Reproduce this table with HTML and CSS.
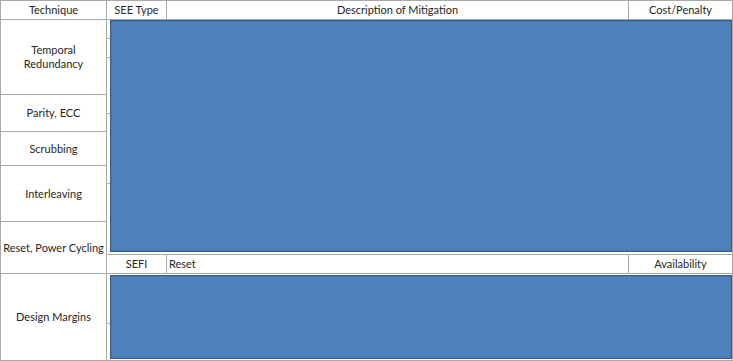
FILE: index.html
```html
<!DOCTYPE html>
<html>
<head>
<meta charset="utf-8">
<link rel="stylesheet" href="styles.css">
</head>
<body>
<div class="table">
  <div class="cell c">Technique</div>
  <div class="cell c">SEE Type</div>
  <div class="cell c">Description of Mitigation</div>
  <div class="cell c">Cost/Penalty</div>

  <div class="cell c r-temporal">Temporal<br>Redundancy</div>
  <div class="cell span-a">
    <span class="tick t1"></span>
    <span class="tick t2"></span>
    <span class="tick t3"></span>
    <span class="tick t4"></span>
    <div class="box box-a"></div>
  </div>
  <div class="cell c r-parity">Parity, ECC</div>
  <div class="cell c r-scrub">Scrubbing</div>
  <div class="cell c r-inter">Interleaving</div>
  <div class="cell c r-reset">Reset, Power Cycling</div>

  <div class="cell c r-sefi col2">SEFI</div>
  <div class="cell l r-sefi col3">Reset</div>
  <div class="cell c r-sefi col4">Availability</div>

  <div class="cell c r-design">Design Margins</div>
  <div class="cell span-b">
    <span class="tick t5"></span>
    <div class="box box-b"></div>
  </div>
</div>
</body>
</html>
```

FILE: styles.css
```css
html, body {
  margin: 0;
  padding: 0;
  background: #ffffff;
}

body {
  font-family: Lato, "Open Sans", "Liberation Sans", sans-serif;
  font-size: 11px;
  color: #262626;
}

.table {
  width: 733px;
  height: 361px;
  box-sizing: border-box;
  padding: 1px;
  display: grid;
  grid-template-columns: 105px 59px 461px 103px;
  grid-template-rows: 18px 74px 36px 33px 55px 32px 18px 86px;
  gap: 1px;
  background: #a9a9a9;
}

.cell {
  background: #ffffff;
  display: flex;
  align-items: center;
  line-height: 14px;
}

.c {
  justify-content: center;
  text-align: center;
}

.l {
  justify-content: flex-start;
  padding-left: 2px;
}

.r-temporal { grid-column: 1; grid-row: 2; }
.r-parity { grid-column: 1; grid-row: 3; }
.r-scrub { grid-column: 1; grid-row: 4; }
.r-inter { grid-column: 1; grid-row: 5; }
.r-reset { grid-column: 1; grid-row: 6 / span 2; }
.r-sefi { grid-row: 7; }
.col2 { grid-column: 2; }
.col3 { grid-column: 3; }
.col4 { grid-column: 4; }
.r-design { grid-column: 1; grid-row: 8; }

.span-a {
  grid-column: 2 / span 3;
  grid-row: 2 / span 5;
  position: relative;
  align-items: stretch;
  padding: 0 0 2px 3px;
}

.span-b {
  grid-column: 2 / span 3;
  grid-row: 8;
  position: relative;
  align-items: stretch;
  padding: 1px 0 1px 3px;
}

.box {
  flex: 1;
  background: #4f81bd;
  border: 1px solid #385d8a;
  box-shadow: inset 0 0 0 1px #4877b0;
}

.tick {
  position: absolute;
  left: 0;
  width: 3px;
  height: 1px;
  background: #b5b5b5;
}

.t1 { top: 18px; }
.t2 { top: 37px; }
.t3 { top: 93px; }
.t4 { top: 163px; }
.t5 { top: 49px; }
```
